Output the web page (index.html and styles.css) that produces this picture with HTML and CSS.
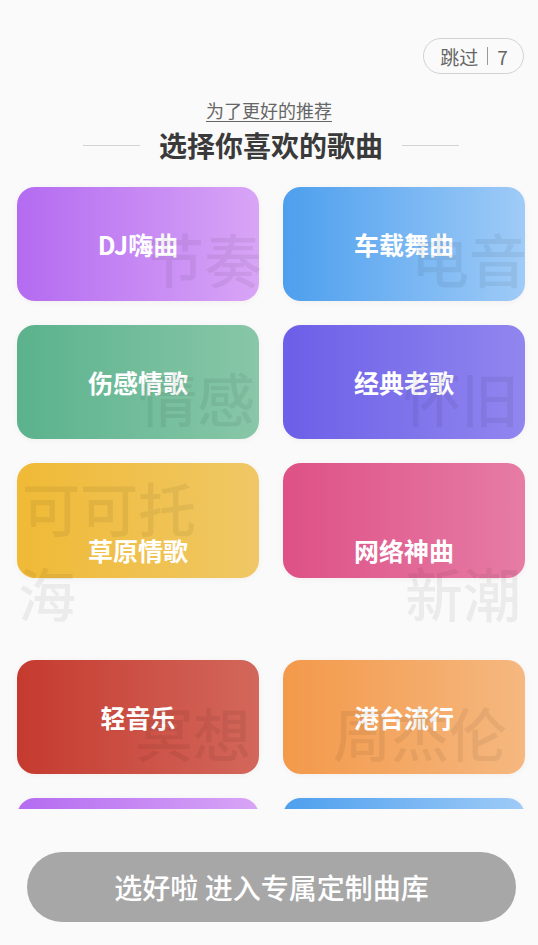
FILE: index.html
```html
<!DOCTYPE html>
<html lang="zh-CN">
<head>
<meta charset="utf-8">
<title>选择你喜欢的歌曲</title>
<link rel="stylesheet" href="styles.css">
</head>
<body>
<div class="page">
  <header class="top">
    <div class="skip">跳过<span class="sep"></span>7</div>
  </header>
  <div class="heading">
    <p class="sub">为了更好的推荐</p>
    <h1 class="title"><span class="line"></span>选择你喜欢的歌曲<span class="line"></span></h1>
  </div>
  <div class="list">
    <div class="grid">
      <div class="card c-purple">DJ嗨曲</div>
      <div class="card c-blue">车载舞曲</div>
      <div class="card c-green">伤感情歌</div>
      <div class="card c-indigo">经典老歌</div>
      <div class="card c-yellow low">草原情歌</div>
      <div class="card c-pink low">网络神曲</div>
      <div class="card c-red">轻音乐</div>
      <div class="card c-orange">港台流行</div>
      <div class="card c-purple"></div>
      <div class="card c-blue"></div>
    </div>
    <div class="marks">
      <span class="mark m1">节奏</span>
      <span class="mark m2">电音</span>
      <span class="mark m3">情感</span>
      <span class="mark m4">怀旧</span>
      <span class="mark m5">可可托</span>
      <span class="mark m6">海</span>
      <span class="mark m7">新潮</span>
      <span class="mark m8">冥想</span>
      <span class="mark m9">周杰伦</span>
    </div>
  </div>
  <div class="footer">
    <div class="go">选好啦 进入专属定制曲库</div>
  </div>
</div>
</body>
</html>
```
FILE: styles.css
```css
* { box-sizing: border-box; }
html, body {
  margin: 0;
  padding: 0;
  background: #fafafa;
  font-family: "Noto Sans CJK SC", "Noto Sans", sans-serif;
}
.page {
  width: 538px;
  height: 945px;
  overflow: hidden;
  display: flex;
  flex-direction: column;
}
.top {
  display: flex;
  justify-content: flex-end;
  padding: 38px 14px 0 0;
}
.skip {
  height: 36px;
  width: 101px;
  border: 1px solid #d2d2d2;
  border-radius: 18px;
  background: #fafafa;
  color: #666;
  font-size: 19px;
  display: flex;
  align-items: center;
  justify-content: center;
  gap: 9px;
  padding: 0 0 0 1px;
  line-height: 1;
}
.sep {
  width: 1px;
  height: 18px;
  background: #999;
}
.heading {
  display: flex;
  flex-direction: column;
  align-items: center;
}
.sub {
  margin: 23px 0 0;
  font-size: 18px;
  line-height: 26px;
  color: #666;
  text-decoration: underline;
  text-underline-offset: 3px;
  text-decoration-thickness: 1px;
}
.title {
  margin: 4px 0 0 4px;
  font-size: 28px;
  line-height: 36px;
  font-weight: 700;
  color: #3a3a3a;
  display: flex;
  align-items: center;
  gap: 19px;
}
.line {
  width: 57px;
  height: 1px;
  background: #d3d3d3;
}
.list {
  position: relative;
  margin-top: 17px;
  height: 629px;
  overflow: hidden;
  padding: 7px 0 0 17px;
}
.grid {
  display: grid;
  grid-template-columns: 242px 242px;
  column-gap: 24px;
  row-gap: 24px;
}
.card {
  height: 114px;
  border-radius: 18px;
  display: flex;
  align-items: center;
  justify-content: center;
  color: #fff;
  font-size: 25px;
  line-height: 1.4;
  font-weight: 700;
  box-shadow: 0 1px 5px rgba(200, 150, 150, 0.12);
}
.card.low {
  height: 115px;
  align-items: flex-end;
  padding-bottom: 10px;
  margin-bottom: 58px;
}
.c-purple { background: linear-gradient(90deg, #b46bf1, #d8a5f6); }
.c-blue { background: linear-gradient(90deg, #4d9fee, #9fcbf7); }
.c-green { background: linear-gradient(90deg, #5bb28d, #88c7a8); }
.c-indigo { background: linear-gradient(90deg, #6c5fe8, #9186ef); }
.c-yellow { background: linear-gradient(90deg, #f0ba36, #efc765); }
.c-pink { background: linear-gradient(90deg, #de5186, #e67ca5); }
.c-red { background: linear-gradient(90deg, #c53a2f, #d3675b); }
.c-orange { background: linear-gradient(90deg, #f3994a, #f5b880); }
.marks {
  position: absolute;
  inset: 0;
  pointer-events: none;
}
.mark {
  position: absolute;
  font-size: 58px;
  line-height: 1;
  font-weight: 500;
  color: rgba(0, 0, 0, 0.058);
  white-space: nowrap;
}
.m1 { left: 146px; top: 49px; }
.m2 { left: 411px; top: 49px; }
.m3 { left: 139px; top: 188px; }
.m4 { left: 403px; top: 188px; }
.m5 { left: 22px; top: 298px; }
.m6 { left: 18px; top: 383px; }
.m7 { left: 405px; top: 383px; }
.m8 { left: 135px; top: 523px; }
.m9 { left: 333px; top: 523px; }
.footer {
  display: flex;
  justify-content: center;
  padding: 43px 0 0 5px;
}
.go {
  width: 489px;
  height: 70px;
  border-radius: 35px;
  background: #a7a7a7;
  color: #fff;
  font-size: 28px;
  font-weight: 500;
  display: flex;
  align-items: center;
  justify-content: center;
  line-height: 1.3;
}
```
